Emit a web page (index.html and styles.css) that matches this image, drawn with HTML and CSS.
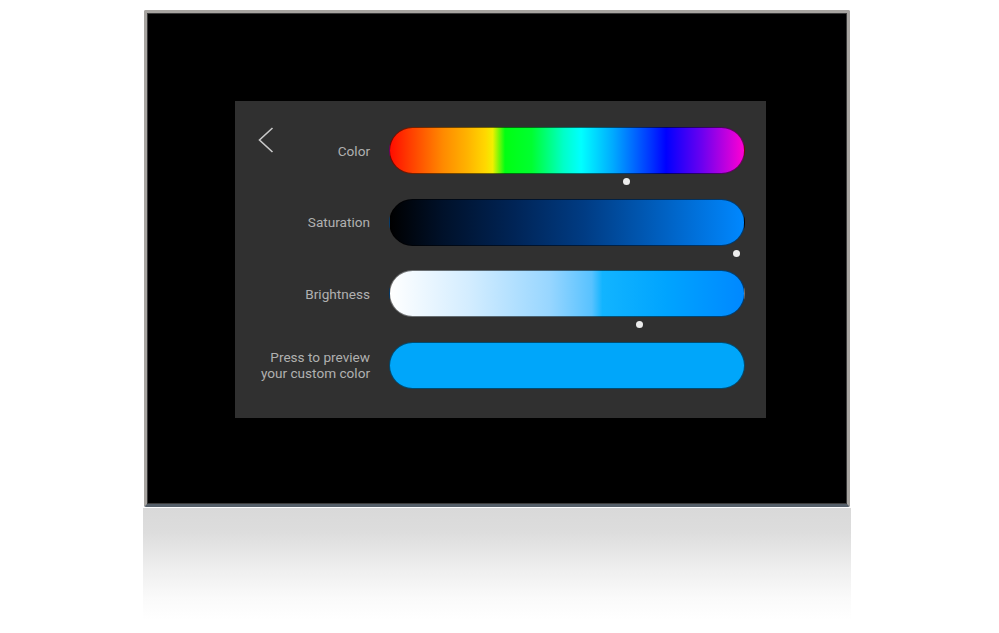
FILE: index.html
```html
<!DOCTYPE html>
<html lang="en">
<head>
    <meta charset="UTF-8">
    <meta name="viewport" content="width=device-width, initial-scale=1.0">
    <title>Custom Color</title>
    <link rel="stylesheet" href="styles.css">
</head>
<body>
    <div class="stage">
        <div class="device">
            <div class="screen">
                <div class="label">
                    <button class="back" title="Back">
                        <svg width="16" height="26" viewBox="0 0 16 26">
                            <polyline points="14.5,1 1.5,13 14.5,25" fill="none" stroke="#c9c9c9" stroke-width="1.6"/>
                        </svg>
                    </button>
                    <span>Color</span>
                </div>
                <div class="track hue"><span class="knob" style="left: 66.9%"></span></div>

                <div class="label"><span>Saturation</span></div>
                <div class="track saturation"><span class="knob" style="left: 97.8%"></span></div>

                <div class="label"><span>Brightness</span></div>
                <div class="track brightness"><span class="knob" style="left: 70.5%"></span></div>

                <div class="label"><span>Press to preview<br>your custom color</span></div>
                <button class="track preview"></button>
            </div>
        </div>
        <div class="reflection"></div>
    </div>
</body>
</html>
```

FILE: styles.css
```css
/* Basic Reset */
* {
    margin: 0;
    padding: 0;
    box-sizing: border-box;
    font-family: Roboto, "Liberation Sans", sans-serif;
}

body {
    background-color: #fff;
}

/* Wall panel */
.stage {
    padding: 10px 0 0 144px;
}

.device {
    width: 706px;
    height: 497px;
    padding: 88px 0 0 88px;
    background: #000;
    border: 3px solid #a7a4a0;
    border-bottom-color: #56606a;
    border-radius: 2px;
    box-shadow: inset 0 0 0 1px #3a3a3a;
}

.reflection {
    width: 708px;
    height: 112px;
    margin: 1px 0 0 -1px;
    background: linear-gradient(#d9d9d9 0%, #dddddd 22%, #efefef 55%, #fafafa 80%, #fff 100%);
}

/* Touch screen */
.screen {
    display: grid;
    grid-template-columns: 112px 356px;
    grid-auto-rows: 47px;
    column-gap: 19px;
    row-gap: 24.6px;
    width: 531px;
    height: 317px;
    padding: 26px 21px 0 23px;
    background: #303030;
}

.label {
    display: flex;
    align-items: center;
    justify-content: flex-end;
    color: #b0b0b0;
    font-size: 13.6px;
    line-height: 16px;
    text-align: right;
    white-space: nowrap;
}

.back {
    display: flex;
    align-self: flex-start;
    margin-right: auto;
    background: none;
    border: none;
    cursor: pointer;
}

.track {
    position: relative;
    border: 1px solid rgba(0, 0, 0, 0.55);
    border-radius: 24px;
}

.knob {
    position: absolute;
    top: calc(100% + 5px);
    width: 7px;
    height: 7px;
    margin-left: -3.5px;
    background: #ececec;
    border-radius: 50%;
}

.hue {
    background: linear-gradient(90deg,
        #ff0d00 0%, #ff3800 5%, #ff8a00 15%, #ffb400 22%, #ffd800 27%,
        #f2ef00 29%, #00ff12 32.5%, #00ff30 40%, #00ffc8 49%, #00ffff 54%,
        #00aaff 63%, #0030ff 74%, #0000ff 78%, #6a00f0 88%, #ff00d2 100%);
}

.saturation {
    background: linear-gradient(90deg,
        #000000 0%, #00112a 15%, #002456 35%, #003c84 55%, #0062c4 78%, #0088ff 100%);
}

.brightness {
    background: linear-gradient(90deg,
        #ffffff 0%, #d4edff 22%, #98d6ff 45%, #58c2ff 57%, #12b4ff 60%,
        #00a4ff 78%, #0088ff 100%);
}

.preview {
    background: #00a6fa;
    cursor: pointer;
}
```
